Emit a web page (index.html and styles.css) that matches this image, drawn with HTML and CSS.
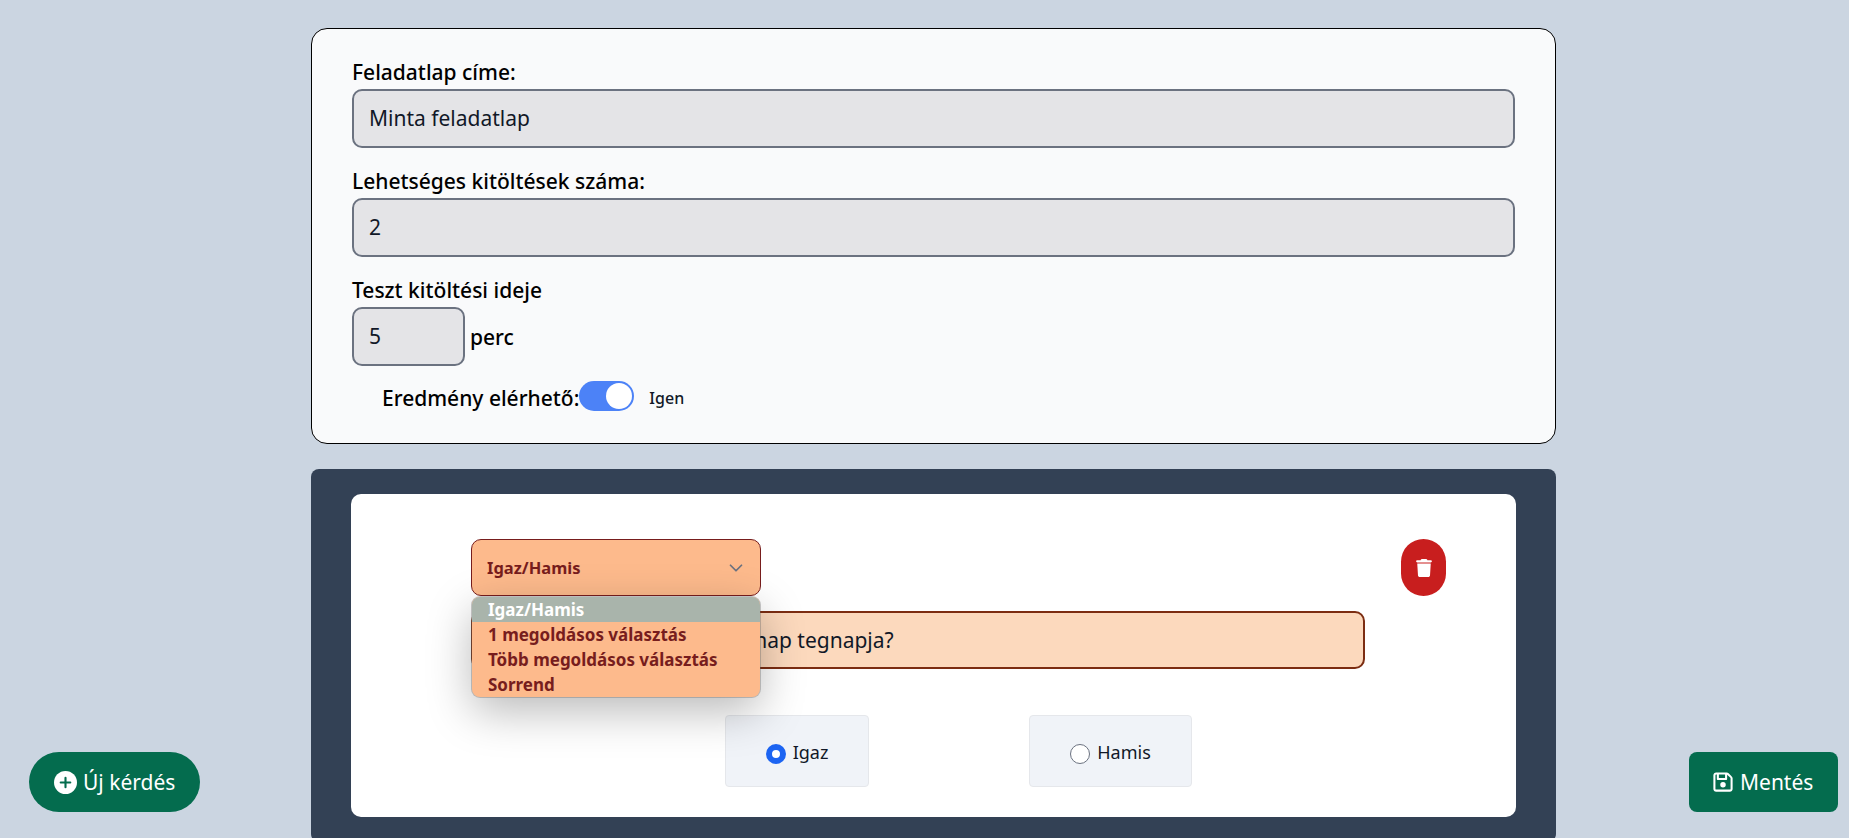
FILE: index.html
```html
<!DOCTYPE html>
<html lang="hu">
<head>
<meta charset="utf-8">
<title>Feladatlap</title>
<link rel="stylesheet" href="styles.css">
</head>
<body>
<main class="page">
  <section class="settings">
    <label class="label">Feladatlap címe:</label>
    <div class="field">Minta feladatlap</div>
    <label class="label label-next">Lehetséges kitöltések száma:</label>
    <div class="field">2</div>
    <label class="label label-next">Teszt kitöltési ideje</label>
    <div class="time-row">
      <div class="field field-small">5</div>
      <span class="unit">perc</span>
    </div>
    <div class="toggle-row">
      <span class="toggle-label">Eredmény elérhető:</span>
      <span class="toggle"><span class="knob"></span></span>
      <span class="toggle-text">Igen</span>
    </div>
  </section>
  <section class="questions">
    <div class="question">
      <div class="question-head">
        <div class="select-wrap">
          <div class="select">
            <span>Igaz/Hamis</span>
            <svg class="chevron" viewBox="0 0 20 20" width="22" height="22"><path d="M5 7.5l5 5 5-5" fill="none" stroke="#6b7280" stroke-width="1.6" stroke-linecap="round" stroke-linejoin="round"/></svg>
          </div>
          <ul class="dropdown">
            <li class="option option-active">Igaz/Hamis</li>
            <li class="option">1 megoldásos választás</li>
            <li class="option">Több megoldásos választás</li>
            <li class="option">Sorrend</li>
          </ul>
        </div>
        <button class="delete" type="button">
          <svg viewBox="0 0 448 512" width="16" height="18"><path fill="#fff" d="M135.2 17.7L128 32H32C14.3 32 0 46.3 0 64S14.3 96 32 96H416c17.7 0 32-14.3 32-32s-14.3-32-32-32H320l-7.2-14.3C307.4 6.8 296.3 0 284.2 0H163.8c-12.1 0-23.2 6.8-28.6 17.7zM416 128H32L53.2 467c1.6 25.3 22.6 45 47.9 45H346.9c25.3 0 46.3-19.7 47.9-45L416 128z"/></svg>
        </button>
      </div>
      <div class="question-text">A mai nap a holnapi nap tegnapja?</div>
      <div class="answers">
        <div class="answer answer-true"><span class="radio radio-on"></span><span class="answer-text">Igaz</span></div>
        <div class="answer answer-false"><span class="radio"></span><span class="answer-text">Hamis</span></div>
      </div>
    </div>
  </section>
</main>
<button class="action action-new" type="button">
  <svg viewBox="0 0 24 24" width="23" height="23"><circle cx="12" cy="12" r="12" fill="#fff"/><path d="M12 7v10M7 12h10" stroke="#046c4e" stroke-width="2.2" stroke-linecap="round"/></svg>
  <span>Új kérdés</span>
</button>
<button class="action action-save" type="button">
  <svg viewBox="0 0 448 512" width="20" height="22"><path fill="#fff" d="M48 96V416c0 8.8 7.2 16 16 16H384c8.8 0 16-7.2 16-16V170.5c0-4.2-1.7-8.3-4.7-11.3l33.9-33.9c12 12 18.7 28.3 18.7 45.3V416c0 35.3-28.7 64-64 64H64c-35.3 0-64-28.7-64-64V96C0 60.7 28.7 32 64 32H309.5c17 0 33.3 6.7 45.3 18.7l74.5 74.5-33.9 33.9L320.8 84.7c-.3-.3-.5-.5-.8-.8V184c0 13.3-10.7 24-24 24H104c-13.3 0-24-10.7-24-24V80H64c-8.8 0-16 7.2-16 16zm80-16v80H272V80H128zm32 240a64 64 0 1 1 128 0 64 64 0 1 1 -128 0z"/></svg>
  <span>Mentés</span>
</button>
</body>
</html>
```
FILE: styles.css
```css
* { box-sizing: border-box; }
html, body { margin: 0; height: 100%; overflow: hidden; }
body { background: #cbd5e1; font-family: "Noto Sans", "Open Sans", sans-serif; color: #000; }
.page { padding: 28px 293px 0 311px; }
.settings { height: 416px; padding: 29px 40px 0; background: #f9fafb; border: 1px solid #000; border-radius: 16px; }
.label { display: block; height: 31px; font-size: 21px; line-height: 29px; font-weight: 500; }
.label-next { margin-top: 19px; }
.field { height: 59px; padding: 0 15px; background: #e4e4e7; border: 2px solid #6b7280; border-radius: 10px; font-size: 21px; line-height: 55px; color: #111827; }
.time-row { display: flex; align-items: center; gap: 5px; }
.field-small { width: 113px; }
.unit { font-size: 21px; font-weight: 500; }
.toggle-row { display: flex; align-items: center; margin: 15px 0 0 30px; height: 30px; }
.toggle-label { padding-top: 4px; font-size: 21px; font-weight: 500; }
.toggle { display: flex; align-items: center; justify-content: flex-end; width: 55px; height: 30px; padding: 2px; background: #4c82f7; border-radius: 15px; margin-right: 15px; }
.knob { width: 26px; height: 26px; border-radius: 50%; background: #fff; }
.toggle-text { padding-top: 3px; font-size: 16px; font-weight: 500; color: #111827; }
.questions { height: 373px; margin-top: 25px; padding: 25px 40px; background: #334155; border-radius: 8px; }
.question { height: 323px; padding: 45px 70px 0 120px; background: #fff; border-radius: 10px; }
.question-head { display: flex; justify-content: space-between; align-items: flex-start; }
.select-wrap { position: relative; width: 290px; }
.select { display: flex; align-items: center; justify-content: space-between; height: 57px; padding: 0 13px 0 15px; background: #fdba8c; border: 1px solid #771d1d; border-radius: 10px; color: #771d1d; font-size: 16.5px; font-weight: 700; }
.dropdown { position: absolute; z-index: 5; top: 58px; left: 1px; width: 288px; margin: 0; padding: 0; list-style: none; background: #fdba8c; border-radius: 8px; overflow: hidden; box-shadow: 0 0 0 1px rgba(100,100,100,.35), 0 14px 45px rgba(0,0,0,.28); }
.option { height: 25px; padding: 0 15px 0 16px; font-size: 17px; line-height: 25px; font-weight: 700; color: #771d1d; }
.option-active { background: #a9b4ab; color: #fff; }
.delete { display: flex; align-items: center; justify-content: center; width: 45px; height: 57px; padding: 0; border: 0; border-radius: 23px; background: #c81e1e; }
.question-text { width: 894px; height: 58px; margin-top: 15px; padding-left: 80px; background: #fcd9bd; border: 2px solid #7c2d12; border-radius: 10px; font-size: 21px; line-height: 54px; color: #111827; }
.answers { display: flex; gap: 160px; margin: 46px 0 0 254px; }
.answer { display: flex; align-items: center; justify-content: center; gap: 7px; height: 72px; background: #f0f3f8; border: 1px solid #e5e7eb; border-radius: 4px; font-size: 18px; color: #111827; }
.answer-true { width: 144px; }
.answer-false { width: 163px; }
.answer-text { padding-top: 2px; }
.radio { width: 20px; height: 20px; margin-top: 5px; border-radius: 50%; background: #fff; border: 1px solid #6b7280; }
.radio-on { border: 6px solid #1c64f2; }
.action { position: fixed; bottom: 26px; display: flex; align-items: center; height: 60px; padding: 0; border: 0; background: #046c4e; color: #fff; font: inherit; font-size: 21px; }
.action-new { left: 29px; width: 171px; padding-left: 25px; gap: 6px; border-radius: 30px; }
.action-save { left: 1689px; width: 149px; padding-left: 24px; gap: 7px; border-radius: 8px; }
```
